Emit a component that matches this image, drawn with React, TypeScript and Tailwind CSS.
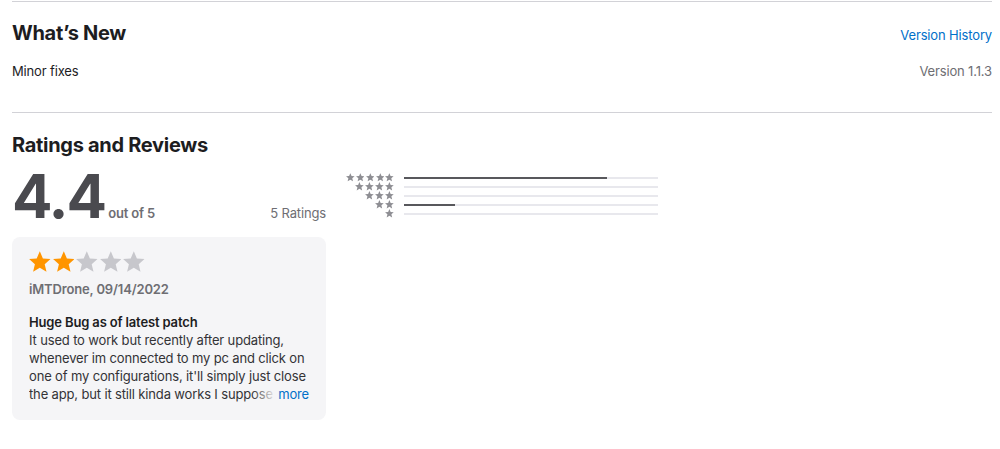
import React from "react";

const histogram = [
  { stars: 5, pct: 80 },
  { stars: 4, pct: 0 },
  { stars: 3, pct: 0 },
  { stars: 2, pct: 20 },
  { stars: 1, pct: 0 },
];

function Star({ className }: { className?: string }) {
  return (
    <svg viewBox="1.2 1.5 21.6 20.6" className={className} fill="currentColor">
      <path d="M12 1.6l3.1 7.1 7.6.7-5.8 5.1 1.8 7.5L12 18l-6.7 4 1.8-7.5L1.3 9.4l7.6-.7z" />
    </svg>
  );
}

export default function App() {
  return (
    <div
      className="w-[1000px] h-[449px] bg-white pl-3 pr-2 pt-px text-[#1d1d1f]"
      style={{ fontFamily: "Inter, 'Noto Sans', sans-serif" }}
    >
      {/* What's New */}
      <section className="border-t border-[#d2d2d7] pt-[16px] pb-[32px]">
        <div className="flex items-baseline justify-between">
          <h2 className="text-[20px] font-bold tracking-[-0.3px]">What’s New</h2>
          <a className="text-[13px] tracking-[-0.15px] text-[#0070c9]">Version History</a>
        </div>
        <div className="mt-[14px] flex justify-between text-[13px] leading-[18px] tracking-[-0.15px]">
          <p>Minor fixes</p>
          <p className="text-[#6e6e73]">Version 1.1.3</p>
        </div>
      </section>

      {/* Ratings and Reviews */}
      <section className="border-t border-[#d2d2d7] pt-[17px]">
        <h2 className="text-[20px] font-bold tracking-[-0.3px]">Ratings and Reviews</h2>
        <div className="mt-[4px] grid grid-cols-[314px_312px] gap-5">
          <div>
            <div className="flex items-baseline justify-between tracking-[-0.15px]">
              <div className="flex items-baseline gap-[3px]">
                <span className="text-[60px] font-bold leading-[64px] tracking-[-2px] text-[#4a4a4f]">
                  4.4
                </span>
                <span className="text-[13px] font-semibold text-[#6e6e73]">out of 5</span>
              </div>
              <span className="text-[13px] text-[#6e6e73]">5 Ratings</span>
            </div>

            <div className="mt-[9px] h-[183px] rounded-lg bg-[#f5f5f7] px-[17px] pt-[14px] tracking-[-0.15px]">
              <div className="flex gap-[2px] text-[#c7c7cc]">
                {[0, 1, 2, 3, 4].map((i) => (
                  <Star
                    key={i}
                    className={`h-[21px] w-[21.6px] ${i < 2 ? "text-[#ff9500]" : ""}`}
                  />
                ))}
              </div>
              <p className="mt-[8px] text-[13px] font-semibold text-[#6e6e73]">
                iMTDrone, 09/14/2022
              </p>
              <h3 className="mt-[13px] text-[13px] font-semibold leading-[18px]">
                Huge Bug as of latest patch
              </h3>
              <div className="relative text-[13px] leading-[18px] text-[#333336]">
                <p className="h-[72px] overflow-hidden">
                  It used to work but recently after updating, whenever im connected to my pc and
                  click on one of my configurations, it'll simply just close the app, but it still
                  kinda works I suppose nothing more to say really
                </p>
                <span className="absolute bottom-0 right-0 flex">
                  <span className="w-[24px] bg-gradient-to-r from-transparent to-[#f5f5f7]" />
                  <span className="bg-[#f5f5f7] pl-[2px] text-[#0070c9]">more</span>
                </span>
              </div>
            </div>
          </div>

          <div className="pt-[9px]">
            {histogram.map((row) => (
              <div key={row.stars} className="flex h-[9px] items-center gap-[10px]">
                <div className="flex w-[48px] justify-end gap-[1.2px] text-[#8e8e93]">
                  {Array.from({ length: row.stars }).map((_, i) => (
                    <Star key={i} className="h-[8.5px] w-[8.8px]" />
                  ))}
                </div>
                <div className="h-[2px] flex-1 bg-[#e8e8ed]">
                  <div className="h-full bg-[#58585c]" style={{ width: `${row.pct}%` }} />
                </div>
              </div>
            ))}
          </div>
        </div>
      </section>
    </div>
  );
}
